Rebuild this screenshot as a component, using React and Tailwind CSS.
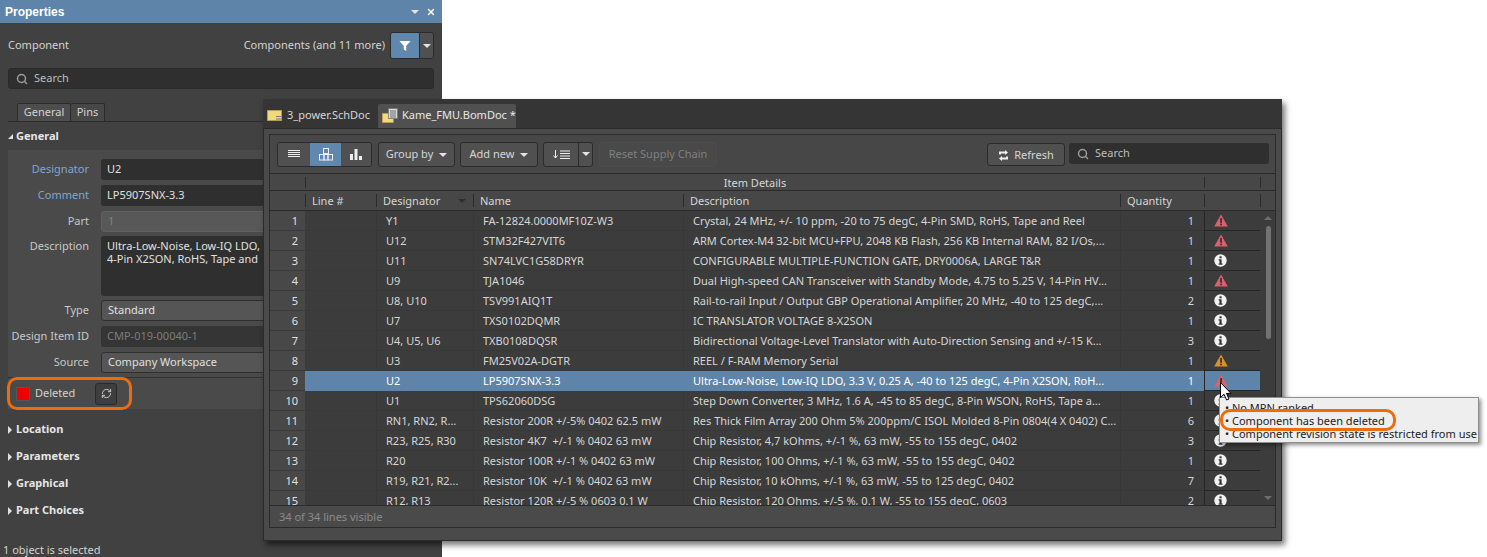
import { RefreshCw, Search, X } from "lucide-react";

const font = "font-['Noto_Sans',sans-serif]";

const rows = [
  ["1", "Y1", "FA-12824.0000MF10Z-W3", "Crystal, 24 MHz, +/- 10 ppm, -20 to 75 degC, 4-Pin SMD, RoHS, Tape and Reel", "1", "red"],
  ["2", "U12", "STM32F427VIT6", "ARM Cortex-M4 32-bit MCU+FPU, 2048 KB Flash, 256 KB Internal RAM, 82 I/Os,...", "1", "red"],
  ["3", "U11", "SN74LVC1G58DRYR", "CONFIGURABLE MULTIPLE-FUNCTION GATE, DRY0006A, LARGE T&R", "1", "info"],
  ["4", "U9", "TJA1046", "Dual High-speed CAN Transceiver with Standby Mode, 4.75 to 5.25 V, 14-Pin HV...", "1", "red"],
  ["5", "U8, U10", "TSV991AIQ1T", "Rail-to-rail Input / Output GBP Operational Amplifier, 20 MHz, -40 to 125 degC,...", "2", "info"],
  ["6", "U7", "TXS0102DQMR", "IC TRANSLATOR VOLTAGE 8-X2SON", "1", "info"],
  ["7", "U4, U5, U6", "TXB0108DQSR", "Bidirectional Voltage-Level Translator with Auto-Direction Sensing and +/-15 K...", "3", "info"],
  ["8", "U3", "FM25V02A-DGTR", "REEL / F-RAM Memory Serial", "1", "orange"],
  ["9", "U2", "LP5907SNX-3.3", "Ultra-Low-Noise, Low-IQ LDO, 3.3 V, 0.25 A, -40 to 125 degC, 4-Pin X2SON, RoH...", "1", "red"],
  ["10", "U1", "TPS62060DSG", "Step Down Converter, 3 MHz, 1.6 A, -45 to 85 degC, 8-Pin WSON, RoHS, Tape a...", "1", "info"],
  ["11", "RN1, RN2, R...", "Resistor 200R +/-5% 0402 62.5 mW", "Res Thick Film Array 200 Ohm 5% 200ppm/C ISOL Molded 8-Pin 0804(4 X 0402) C...", "6", "info"],
  ["12", "R23, R25, R30", "Resistor 4K7  +/-1 % 0402 63 mW", "Chip Resistor, 4,7 kOhms, +/-1 %, 63 mW, -55 to 155 degC, 0402", "3", "info"],
  ["13", "R20", "Resistor 100R +/-1 % 0402 63 mW", "Chip Resistor, 100 Ohms, +/-1 %, 63 mW, -55 to 155 degC, 0402", "1", "info"],
  ["14", "R19, R21, R2...", "Resistor 10K  +/-1 % 0402 63 mW", "Chip Resistor, 10 kOhms, +/-1 %, 63 mW, -55 to 125 degC, 0402", "7", "info"],
  ["15", "R12, R13", "Resistor 120R +/-5 % 0603 0.1 W", "Chip Resistor, 120 Ohms, +/-5 %, 0.1 W, -55 to 155 degC, 0603", "2", "info"],
];

function Warn({ color }) {
  return (
    <svg width="14" height="13" viewBox="0 0 14 13">
      <path d="M7 0.5 L13.8 12.5 H0.2 Z" fill={color} />
      <rect x="6.2" y="4" width="1.7" height="4.8" fill="#33302e" />
      <rect x="6.2" y="9.6" width="1.7" height="1.7" fill="#33302e" />
    </svg>
  );
}

function Info() {
  return (
    <svg width="13" height="13" viewBox="0 0 13 13">
      <circle cx="6.5" cy="6.5" r="6.2" fill="#f2f2f2" />
      <rect x="5.5" y="2.3" width="2.1" height="2" fill="#333" />
      <path d="M4.6 5.3 H7.6 V9.6 H8.5 V10.8 H4.6 V9.6 H5.5 V6.5 H4.6 Z" fill="#333" />
    </svg>
  );
}

function StatusIcon({ kind }) {
  if (kind === "red") return <Warn color="#d9606c" />;
  if (kind === "orange") return <Warn color="#d9912f" />;
  return <Info />;
}

function SchIcon() {
  return (
    <svg width="15" height="11" viewBox="0 0 15 11" className="shrink-0">
      <rect x="0.3" y="0.3" width="14.4" height="10.4" fill="#f0d97c" stroke="#b59a45" strokeWidth="0.6" />
      <rect x="9" y="6" width="5" height="1" fill="#777" />
      <rect x="9" y="8.5" width="5" height="1" fill="#777" />
    </svg>
  );
}

function BomIcon() {
  return (
    <svg width="16" height="15" viewBox="0 0 16 15" className="shrink-0">
      <rect x="0.3" y="5.3" width="11" height="9.4" fill="#f0d97c" stroke="#b59a45" strokeWidth="0.6" />
      <rect x="6.5" y="0.5" width="9" height="10" fill="#d8d8d8" stroke="#777" strokeWidth="0.8" />
      <path d="M8 3H14M8 5H14M8 7H14M8 9H14" stroke="#555" strokeWidth="0.8" />
    </svg>
  );
}

function Caret({ className = "border-t-[#e4e4e4]" }) {
  return <span className={`inline-block w-0 h-0 border-x-[4px] border-x-transparent border-t-[4px] ${className}`} />;
}

function SideCaret() {
  return <span className="inline-block w-0 h-0 border-y-[4px] border-y-transparent border-l-[4px] border-l-[#e0e0e0]" />;
}

function Field({ label, labelClass = "text-[#c8c8c8]", children, className = "" }) {
  return (
    <div className={`flex items-center ${className}`}>
      <span className={`w-[81px] text-right shrink-0 whitespace-nowrap ${labelClass}`}>{label}</span>
      <div className="ml-[12px] flex-1">{children}</div>
    </div>
  );
}

function Properties() {
  return (
    <div className="w-[442px] h-[557px] bg-[#414141] flex flex-col text-[11px] text-[#d2d2d2] shrink-0">
      <div className="h-[23px] shrink-0 bg-[#5f84a9] flex items-center justify-between pl-[5px] pr-[6px] text-white font-bold">
        <span className="font-['Liberation_Sans',sans-serif] text-[12px]">Properties</span>
        <div className="flex items-center gap-[7px]">
          <Caret />
          <X size={10} strokeWidth={3.5} />
        </div>
      </div>
      <div className="h-[45px] shrink-0 flex items-center justify-between px-[8px]">
        <span>Component</span>
        <div className="flex items-center gap-[5px]">
          <span>Components (and 11 more)</span>
          <div className="flex h-[27px] w-[44px] rounded-[3px] border border-[#2b2b2b] overflow-hidden">
            <div className="w-[28px] bg-[#6087ae] flex items-center justify-center">
              <svg width="12" height="12" viewBox="0 0 12 12"><path d="M0.5 1 H11.5 L7.2 6 V11 L4.8 9.6 V6 Z" fill="#fff" /></svg>
            </div>
            <div className="flex-1 bg-[#505050] border-l border-[#2b2b2b] flex items-center justify-center"><Caret /></div>
          </div>
        </div>
      </div>
      <div className="mx-[8px] h-[21px] shrink-0 rounded-[3px] bg-[#2f2f2f] border border-[#2a2a2a] flex items-center pl-[7px] gap-[6px] text-[#bdbdbd]">
        <Search size={12} strokeWidth={3} className="text-[#9b9b9b]" />
        <span>Search</span>
      </div>
      <div className="mt-[14px] h-[19px] shrink-0 ml-[8px] flex border-b border-[#2b2b2b] pl-[9px]">
        <div className="w-[54px] bg-[#4d4d4d] border border-b-0 border-[#2b2b2b] rounded-t-[2px] flex items-center justify-center">General</div>
        <div className="w-[34px] bg-[#474747] border border-l-0 border-b-0 border-[#2b2b2b] rounded-t-[2px] flex items-center justify-center">Pins</div>
      </div>
      <div className="h-[28px] shrink-0 flex items-center pl-[8px] gap-[3px] pt-[1px] font-bold text-[#e6e6e6]">
        <span className="inline-block w-0 h-0 border-b-[5px] border-b-[#e0e0e0] border-l-[5px] border-l-transparent" />
        General
      </div>
      <div className="ml-[8px] shrink-0 bg-[#4a4a4a] flex flex-col pt-[9px] h-[227px]">
        <Field label="Designator" labelClass="text-[#7ea6d4]" className="h-[21px]">
          <div className="h-[21px] bg-[#2f2f2f] rounded-[3px] flex items-center pl-[6px] text-[#e0e0e0]">U2</div>
        </Field>
        <Field label="Comment" labelClass="text-[#7ea6d4]" className="h-[21px] mt-[5px]">
          <div className="h-[21px] bg-[#2f2f2f] rounded-[3px] flex items-center pl-[6px] text-[#e0e0e0]">LP5907SNX-3.3</div>
        </Field>
        <Field label="Part" className="h-[21px] mt-[5px]">
          <div className="h-[21px] bg-[#585858] border border-[#606060] rounded-[3px] flex items-center pl-[6px] text-[#808080]">1</div>
        </Field>
        <div className="flex items-start mt-[4px] h-[60px]">
          <span className="w-[81px] text-right shrink-0 text-[#c8c8c8] pt-[2px]">Description</span>
          <div className="ml-[12px] flex-1 h-[60px] bg-[#2f2f2f] rounded-[3px] pl-[6px] pt-[3px] leading-[13px] text-[#e0e0e0] whitespace-pre">
            {"Ultra-Low-Noise, Low-IQ LDO,\n4-Pin X2SON, RoHS, Tape and"}
          </div>
        </div>
        <Field label="Type" className="h-[21px] mt-[4px]">
          <div className="h-[21px] bg-[#555555] border border-[#2f2f2f] rounded-[3px] flex items-center pl-[6px] text-[#e0e0e0]">Standard</div>
        </Field>
        <Field label="Design Item ID" className="h-[21px] mt-[5px]">
          <div className="h-[21px] bg-[#353535] rounded-[3px] flex items-center pl-[6px] text-[#7c7c7c]">CMP-019-00040-1</div>
        </Field>
        <Field label="Source" className="h-[21px] mt-[5px]">
          <div className="h-[21px] bg-[#555555] border border-[#2f2f2f] rounded-[3px] flex items-center pl-[6px] text-[#e0e0e0]">Company Workspace</div>
        </Field>
      </div>
      <div className="ml-[8px] h-[32px] shrink-0 bg-[#4a4a4a] border-t border-[#333] flex items-center pl-[8px]">
        <span className="w-[14px] h-[14px] bg-[#f00000] border border-[#555] shrink-0" />
        <span className="ml-[5px] w-[60px]">Deleted</span>
        <div className="w-[22px] h-[22px] rounded-[3px] bg-[#3e3e3e] border border-[#2a2a2a] flex items-center justify-center">
          <RefreshCw size={11} strokeWidth={2} />
        </div>
      </div>
      <div className="pl-[8px] font-bold text-[#e6e6e6] flex flex-col mt-[7px]">
        {["Location", "Parameters", "Graphical", "Part Choices"].map((t) => (
          <div key={t} className="h-[27px] flex items-center gap-[4px]">
            <SideCaret />
            {t}
          </div>
        ))}
      </div>
      <div className="mt-auto pl-[3px] h-[13px] flex items-center text-[#d2d2d2]">1 object is selected</div>
    </div>
  );
}

const COLS = "grid grid-cols-[35px_71px_97px_210px_437px_84px_56px_14px]";

function HeaderCell({ children, className = "" }) {
  return <div className={`border-l border-[#2b2b2b] my-[3px] pl-[6px] leading-none flex items-center justify-between ${className}`}>{children}</div>;
}

function Row({ r, i }) {
  const sel = i === 8;
  const cell = `flex items-center pl-[9px] pt-[1px] whitespace-pre overflow-hidden border-b border-[#3a3a3a] ${sel ? "bg-[#5f84a9] text-white border-[#5f84a9]" : "bg-[#3c3c3c]"}`;
  const div = sel ? "border-l border-[#2f4f6f]" : "border-l border-[#383838]";
  return (
    <div className={`${COLS} h-[20px]`}>
      <div className="bg-[#484848] border-b border-[#3a3a3a] flex items-center justify-end pr-[7px] pt-[1px] text-[#e0e0e0]">{r[0]}</div>
      <div className={cell} />
      <div className={`${cell} ${div}`}>{r[1]}</div>
      <div className={`${cell} ${div}`}>{r[2]}</div>
      <div className={`${cell} ${div}`}>{r[3]}</div>
      <div className={`${cell} ${div} justify-end pr-[10px]`}>{r[4]}</div>
      <div className={`${cell} border-l border-[#262626]`}>
        <span className="flex -mt-[1px]"><StatusIcon kind={r[5]} /></span>
      </div>
      <div className="bg-[#3c3c3c]" />
    </div>
  );
}

function BomWindow() {
  return (
    <div className="absolute left-[263px] top-[99px] w-[1019px] h-[442px] bg-[#3b3b3b] shadow-[3px_4px_6px_rgba(0,0,0,0.55)] flex flex-col text-[11px] text-[#d6d6d6]">
      <div className="h-[29px] shrink-0 flex items-end pl-[4px] bg-[#353535]">
        <div className="h-[24px] w-[111px] flex items-center gap-[5px] pb-[2px]">
          <SchIcon />
          <span className="whitespace-nowrap">3_power.SchDoc</span>
        </div>
        <div className="h-[24px] w-[138px] bg-[#505050] rounded-t-[2px] flex items-center gap-[4px] pl-[4px] pb-[2px] text-[#e8e8e8]">
          <BomIcon />
          <span className="whitespace-nowrap">Kame_FMU.BomDoc *</span>
        </div>
      </div>
      <div className="flex-1 min-h-0 bg-[#4a4a4a] border border-[#2b2b2b] px-[5px] pt-[5px] pb-[12px] flex flex-col">
        <div className="flex-1 min-h-0 flex flex-col border border-[#2b2b2b] bg-[#3c3c3c] overflow-hidden">
          <div className="h-[39px] shrink-0 bg-[#474747] flex items-center pl-[7px] pr-[6px] border-b border-[#2b2b2b]">
            <div className="flex h-[25px] rounded-[3px] border border-[#2b2b2b] overflow-hidden">
              <div className="w-[32px] bg-[#505050] flex items-center justify-center">
                <svg width="12" height="8" viewBox="0 0 12 8"><path d="M0 .5H12M0 2.5H12M0 4.5H12M0 6.5H12" stroke="#eee" strokeWidth="1" /></svg>
              </div>
              <div className="w-[31px] bg-[#6087ae] flex items-center justify-center">
                <svg width="14" height="13" viewBox="0 0 14 13" fill="none" stroke="#eee" strokeWidth="1"><rect x="4.5" y=".5" width="5" height="5" /><rect x=".5" y="6.5" width="4.5" height="5.5" /><rect x="5" y="6.5" width="4" height="5.5" /><rect x="9" y="6.5" width="4.5" height="5.5" /></svg>
              </div>
              <div className="w-[30px] bg-[#505050] flex items-center justify-center">
                <svg width="12" height="11" viewBox="0 0 12 11" fill="#eee"><rect x="0" y="5" width="3" height="6" /><rect x="4.5" y="0" width="3" height="11" /><rect x="9" y="7" width="3" height="4" /></svg>
              </div>
            </div>
            <button className="ml-[6px] w-[77px] h-[25px] pt-[1px] rounded-[3px] border border-[#2b2b2b] bg-[#505050] flex items-center justify-center gap-[6px]">Group by <Caret /></button>
            <button className="ml-[5px] w-[78px] h-[25px] pt-[1px] rounded-[3px] border border-[#2b2b2b] bg-[#505050] flex items-center justify-center gap-[6px]">Add new <Caret /></button>
            <div className="ml-[5px] w-[50px] h-[25px] rounded-[3px] border border-[#2b2b2b] bg-[#505050] flex overflow-hidden">
              <div className="w-[34px] flex items-center justify-center">
                <svg width="17" height="9" viewBox="0 0 17 9" fill="none" stroke="#eee"><path d="M2.5 0V8M.5 5.5 2.5 8 4.5 5.5M7 1H17M7 3.5H17M7 6H17M7 8.5H17" /></svg>
              </div>
              <div className="flex-1 border-l border-[#2b2b2b] flex items-center justify-center"><Caret /></div>
            </div>
            <button className="ml-[6px] w-[118px] h-[25px] pt-[1px] rounded-[3px] border border-[#4c4c4c] bg-[#494949] flex items-center justify-center text-[#808080]">Reset Supply Chain</button>
            <button className="ml-auto w-[78px] h-[23px] mt-[1px] pt-[1px] rounded-[3px] border border-[#2b2b2b] bg-[#505050] flex items-center justify-center gap-[5px]">
              <svg width="11" height="11" viewBox="0 0 11 11" fill="#eee"><path d="M1 4.5 V1.5 H7 V0 L10 2.5 7 5 V3.5 H3 V4.5Z M10 6.5 V9.5 H4 V11 L1 8.5 4 6 V7.5 H8 V6.5Z" /></svg>
              Refresh
            </button>
            <div className="ml-[4px] w-[200px] h-[21px] -mt-[1px] rounded-[3px] bg-[#2f2f2f] flex items-center pl-[8px] gap-[6px] text-[#bdbdbd]">
              <Search size={12} strokeWidth={3} className="text-[#9b9b9b]" />
              Search
            </div>
          </div>
          <div className={`${COLS} h-[17px] shrink-0 bg-[#474747] border-b border-[#2b2b2b]`}>
            <div />
            <div className="col-span-5 border-l border-[#2b2b2b] my-[3px] leading-none flex items-center justify-center">Item Details</div>
            <div className="border-l border-[#2b2b2b] my-[3px]" />
            <div className="border-l border-[#2b2b2b] my-[3px]" />
          </div>
          <div className={`${COLS} h-[20px] shrink-0 bg-[#474747] border-b border-[#2b2b2b]`}>
            <div />
            <HeaderCell>Line #</HeaderCell>
            <HeaderCell className="pr-[7px]">Designator <Caret className="border-t-[#2f2f2f]" /></HeaderCell>
            <HeaderCell>Name</HeaderCell>
            <HeaderCell>Description</HeaderCell>
            <HeaderCell>Quantity</HeaderCell>
            <HeaderCell />
            <HeaderCell />
          </div>
          <div className="relative flex-1 min-h-0 overflow-hidden">
            {rows.map((r, i) => <Row key={r[0]} r={r} i={i} />)}
            <div className="absolute right-0 top-0 bottom-0 w-[14px] bg-[#3c3c3c] flex flex-col items-center pt-[5px]">
              <span className="w-0 h-0 border-x-[4px] border-x-transparent border-b-[4px] border-b-[#6d6d6d]" />
              <span className="mt-[6px] w-[5px] h-[113px] rounded-full bg-[#727272]" />
              <span className="mt-auto mb-[5px] w-0 h-0 border-x-[4px] border-x-transparent border-t-[4px] border-t-[#6d6d6d]" />
            </div>
          </div>
          <div className="h-[22px] shrink-0 bg-[#4a4a4a] border-t border-[#2b2b2b] flex items-center pl-[9px] pt-[1px] text-[#8a8a8a]">34 of 34 lines visible</div>
        </div>
      </div>
    </div>
  );
}

function Tooltip() {
  return (
    <div className="absolute left-[1219px] top-[397px] w-[260px] h-[46px] bg-[#eeeeee] border border-[#8f8f8f] shadow-[2px_2px_4px_rgba(0,0,0,0.45)] text-[11px] text-[#222] leading-[13px] pl-[5px] pt-[3px] whitespace-nowrap">
      <div>• No MPN ranked</div>
      <div>• Component has been deleted</div>
      <div>• Component revision state is restricted from use</div>
    </div>
  );
}

export default function App() {
  return (
    <div className={`relative w-[1487px] h-[557px] bg-white overflow-hidden ${font}`}>
      <Properties />
      <BomWindow />
      <Tooltip />
      <svg className="absolute left-[1220px] top-[382px]" width="12" height="19" viewBox="0 0 12 19">
        <path d="M0.5 0.5 V15.5 L4 12.3 L6.6 18 L9 17 L6.5 11.4 H11 Z" fill="#fff" stroke="#000" strokeWidth="1" />
      </svg>
      <div className="absolute left-[7px] top-[377px] w-[125px] h-[33px] border-[3px] border-[#ee6c0c] rounded-[10px]" />
      <div className="absolute left-[1220px] top-[409px] w-[176px] h-[22px] border-[3px] border-[#ee6c0c] rounded-[10px]" />
    </div>
  );
}
